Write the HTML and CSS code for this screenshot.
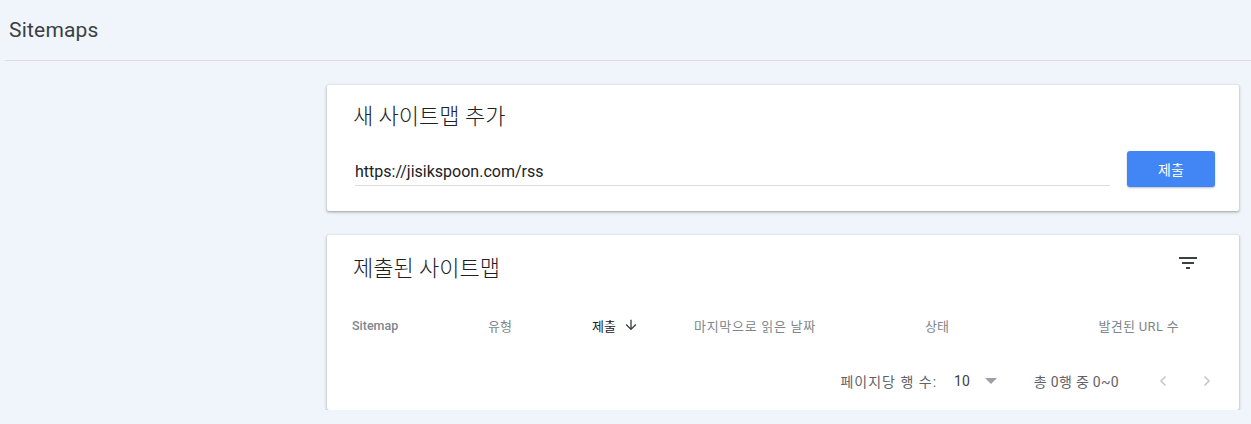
FILE: index.html
```html
<!DOCTYPE html>
<html lang="ko">
<head>
    <meta charset="UTF-8">
    <meta name="viewport" content="width=device-width, initial-scale=1.0">
    <title>Sitemaps</title>
    <link rel="stylesheet" href="styles.css">
</head>
<body>
    <header class="page-header">
        <h1 class="page-title">Sitemaps</h1>
    </header>
    <main class="content">
        <section class="card add-card">
            <h2 class="card-title">새 사이트맵 추가</h2>
            <div class="add-row">
                <div class="url-input">https://jisikspoon.com/rss</div>
                <button class="submit-btn">제출</button>
            </div>
        </section>
        <section class="card list-card">
            <div class="list-head">
                <h2 class="card-title">제출된 사이트맵</h2>
                <svg class="filter-icon" width="24" height="24" viewBox="0 0 24 24"><path d="M3 6h18v2H3zM6 11h12v2H6zM10 16h4v2h-4z" fill="#3c4043"/></svg>
            </div>
            <div class="table-head">
                <span class="col-sitemap">Sitemap</span>
                <span>유형</span>
                <span class="col-sorted">제출
                    <svg width="16" height="16" viewBox="0 0 24 24"><path d="M20 12l-1.41-1.41L13 16.17V4h-2v12.17l-5.58-5.59L4 12l8 8 8-8z" fill="#3c4043"/></svg>
                </span>
                <span class="wide">마지막으로 읽은 날짜</span>
                <span>상태</span>
                <span class="col-count">발견된 URL 수</span>
            </div>
            <div class="pager">
                <span class="per-label">페이지당 행 수:</span>
                <span class="per-page">10</span>
                <svg class="caret" width="12" height="6" viewBox="0 0 12 6"><path d="M0 0h12L6 6z" fill="#9aa0a6"/></svg>
                <span class="range">총 0행 중 0~0</span>
                <svg class="chev" width="24" height="24" viewBox="0 0 24 24"><path d="M14.5 7.5L10 12l4.5 4.5" stroke="#c4c7cb" stroke-width="1.6" fill="none"/></svg>
                <svg class="chev next" width="24" height="24" viewBox="0 0 24 24"><path d="M9.5 7.5L14 12l-4.5 4.5" stroke="#c4c7cb" stroke-width="1.6" fill="none"/></svg>
            </div>
        </section>
    </main>
</body>
</html>
```

FILE: styles.css
```css
body {
    margin: 0;
    background: #f0f4fb;
    color: #202124;
    font-family: Roboto, "Noto Sans CJK KR", sans-serif;
}
.page-header {
    margin-left: 5px;
    height: 60px;
    border-bottom: 1px solid #dadce0;
    display: flex;
    align-items: center;
}
.page-title {
    margin: 0 0 0 4px;
    font-size: 21px;
    font-weight: 400;
    letter-spacing: 0.2px;
    color: #3c4043;
}
.content {
    padding: 24px 12px 0 327px;
    display: flex;
    flex-direction: column;
    gap: 24px;
}
.card {
    background: #fff;
    border-radius: 2px;
    box-shadow: 0 1px 2px rgba(60,64,67,0.3), 0 1px 3px 1px rgba(60,64,67,0.15);
}
.card-title {
    margin: 0;
    font-size: 22px;
    font-weight: 300;
    color: #202124;
}
.add-card {
    height: 126px;
    padding: 13px 24px 0 26px;
    box-sizing: border-box;
}
.add-row {
    display: flex;
    align-items: center;
    margin-top: 23px;
}
.url-input {
    width: 755px;
    margin-left: 2px;
    font-size: 16px;
    padding: 8px 0 4px;
    border-bottom: 1px solid #dadce0;
    color: #202124;
}
.submit-btn {
    margin-left: 17px;
    width: 88px;
    height: 36px;
    margin-top: -2px;
    background: #4285f4;
    color: #fff;
    border: none;
    border-radius: 3px;
    font-size: 14px;
    font-family: inherit;
    box-shadow: 0 1px 2px rgba(0,0,0,0.25);
}
.list-card {
    height: 175px;
    padding: 0 0 0 26px;
    box-sizing: border-box;
}
.list-head {
    display: flex;
    justify-content: space-between;
    align-items: center;
    height: 62px;
    padding: 0 39px 0 0;
}
.filter-icon {
    margin-top: -6px;
}
.table-head {
    display: grid;
    grid-template-columns: 135px 104px 102px 231px 1fr auto;
    align-items: center;
    height: 56px;
    padding-right: 60px;
    font-size: 13px;
    color: #80868b;
}
.col-sitemap {
    margin-left: -1px;
    font-size: 12.5px;
    font-weight: 500;
}
.col-sorted {
    display: flex;
    align-items: center;
    gap: 7px;
    color: #202124;
}
.wide {
    letter-spacing: 0.7px;
}
.col-count {
    letter-spacing: 0.3px;
}
.pager {
    display: flex;
    justify-content: flex-end;
    align-items: center;
    height: 56px;
    padding-right: 20px;
    font-size: 14px;
    color: #5f6368;
}
.per-label {
    letter-spacing: 1px;
}
.per-page {
    margin-left: 17px;
    font-size: 14px;
    color: #3c4043;
}
.caret {
    margin-left: 15px;
}
.range {
    margin-left: 37px;
    margin-right: 32px;
    letter-spacing: 0.3px;
}
.chev.next {
    margin-left: 20px;
}
```
